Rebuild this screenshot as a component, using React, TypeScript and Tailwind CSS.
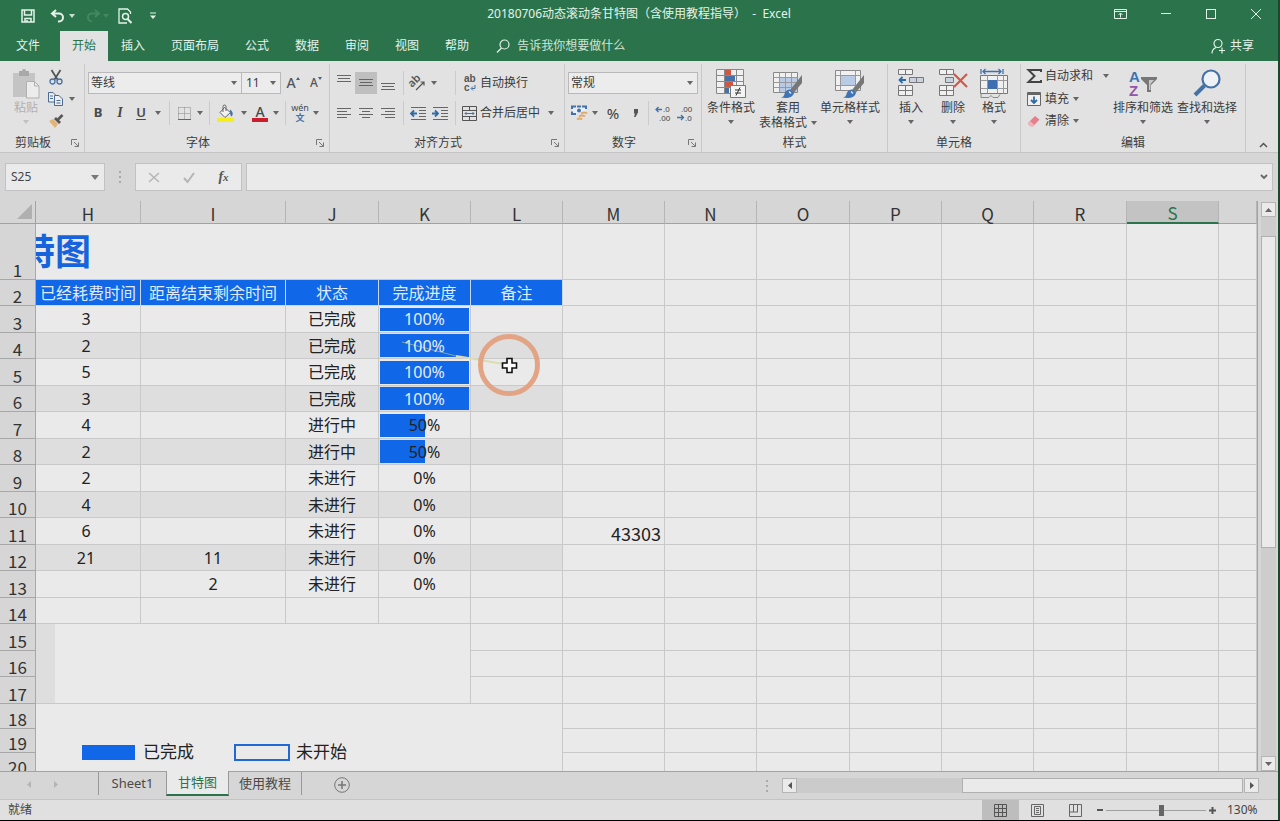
import type { ReactNode } from "react";
import clsx from "clsx";

const TABS = ["插入", "页面布局", "公式", "数据", "审阅", "视图", "帮助"];

const COLUMNS = [
  { id: "H", width: "w-[105px]" },
  { id: "I", width: "w-[145px]" },
  { id: "J", width: "w-[93px]" },
  { id: "K", width: "w-[92px]" },
  { id: "L", width: "w-[92px]" },
  { id: "M", width: "w-[102px]" },
  { id: "N", width: "w-[92px]" },
  { id: "O", width: "w-[93px]" },
  { id: "P", width: "w-[92px]" },
  { id: "Q", width: "w-[92px]" },
  { id: "R", width: "w-[93px]" },
  { id: "S", width: "w-[92px]" },
  { id: "", width: "" },
];

const HEADINGS = ["已经耗费时间", "距离结束剩余时间", "状态", "完成进度", "备注"];

type Task = { row: number; spent: string; left: string; status: string; progress: number };

const TASKS: Task[] = [
  { row: 3, spent: "3", left: "", status: "已完成", progress: 100 },
  { row: 4, spent: "2", left: "", status: "已完成", progress: 100 },
  { row: 5, spent: "5", left: "", status: "已完成", progress: 100 },
  { row: 6, spent: "3", left: "", status: "已完成", progress: 100 },
  { row: 7, spent: "4", left: "", status: "进行中", progress: 50 },
  { row: 8, spent: "2", left: "", status: "进行中", progress: 50 },
  { row: 9, spent: "2", left: "", status: "未进行", progress: 0 },
  { row: 10, spent: "4", left: "", status: "未进行", progress: 0 },
  { row: 11, spent: "6", left: "", status: "未进行", progress: 0 },
  { row: 12, spent: "21", left: "11", status: "未进行", progress: 0 },
  { row: 13, spent: "", left: "2", status: "未进行", progress: 0 },
];

/* ---------- small shared pieces ---------- */

function Icon({ w, h, children, className }: { w: number; h: number; children: ReactNode; className?: string }) {
  return (
    <svg width={w} height={h} viewBox={`0 0 ${w} ${h}`} fill="none" className={clsx("shrink-0 overflow-visible", className)} aria-hidden="true">
      {children}
    </svg>
  );
}

function Caret({ className = "text-[#666]" }: { className?: string }) {
  return (
    <Icon w={6} h={4} className={className}>
      <path d="M0 0h6L3 4z" fill="currentColor" />
    </Icon>
  );
}

function Tool({ label, width = "w-[22px]", active, children }: { label: string; width?: string; active?: boolean; children: ReactNode }) {
  return (
    <button aria-label={label} className={clsx("flex h-[22px] shrink-0 items-center justify-center", width, active && "bg-[#bfbfbf]")}>
      {children}
    </button>
  );
}

function Sep() {
  return (
    <div className="flex w-2 shrink-0 justify-center">
      <div className="h-6 w-px bg-[#cbcbcb]" />
    </div>
  );
}

function Launcher({ label }: { label: string }) {
  return (
    <button aria-label={label} className="flex w-[18px] items-center justify-center">
      <Icon w={8} h={8}>
        <path d="M.5 6V.5H6M3 3l4 4M7.5 3.500v4h-4" stroke="#777" />
      </Icon>
    </button>
  );
}

function Group({ title, width, launcher, children }: { title: string; width: string; launcher?: boolean; children: ReactNode }) {
  return (
    <section className={clsx("flex shrink-0 flex-col border-r border-[#c8c8c8]", width)}>
      <div className="h-[70px] pt-1">{children}</div>
      <div className="flex h-[18px]">
        <span className="flex-1 text-center leading-[18px]">{title}</span>
        {launcher && <Launcher label={`${title}设置`} />}
      </div>
    </section>
  );
}

function BigButton({ label, width, icon }: { label: string; width: string; icon: ReactNode }) {
  return (
    <button className={clsx("flex shrink-0 flex-col items-center whitespace-nowrap", width)}>
      <span className="flex h-8 items-center">{icon}</span>
      <span className="leading-4">{label}</span>
      <span className="flex h-3 items-center">
        <Caret />
      </span>
    </button>
  );
}

function Lines({ widths, align, top = 1 }: { widths: number[]; align: "left" | "center" | "right"; top?: number }) {
  return (
    <Icon w={14} h={18}>
      {widths.map((w, i) => {
        const x = align === "left" ? 0 : align === "right" ? 14 - w : (14 - w) / 2;
        return <rect key={i} x={x} y={top + i * 3} width={w} height={1} fill="#666" />;
      })}
    </Icon>
  );
}

/* ---------- title bar and tabs ---------- */

function TitleBar() {
  return (
    <header className="flex h-[31px] shrink-0 items-center text-[#e4f3ea]">
      <div className="flex flex-1 items-center">
        <button aria-label="保存" className="ml-[17px] flex w-[22px] justify-center">
          <Icon w={14} h={14}>
            <path d="M1 1h12v12H1zM3.500 1v5h7V1M4 13V9.500h6V13M6 11v2" stroke="currentColor" strokeWidth="1.5" />
          </Icon>
        </button>
        <button aria-label="撤消" className="ml-1.5 flex w-6 justify-center">
          <Icon w={15} h={14}>
            <path d="M6 1L2 4.500 6 8M2 4.500h7a4 4 0 010 8H8" stroke="currentColor" strokeWidth="2" />
          </Icon>
        </button>
        <Caret className="text-[#c5e0d0]" />
        <button aria-label="恢复" className="ml-2 flex w-5 justify-center text-[#44875f]">
          <Icon w={15} h={14}>
            <path d="M9 1l4 3.500L9 8M13 4.500H6a4 4 0 000 8" stroke="currentColor" strokeWidth="2" />
          </Icon>
        </button>
        <Caret className="text-[#44875f]" />
        <button aria-label="打印预览" className="ml-1 flex w-6 justify-center">
          <Icon w={14} h={16}>
            <path d="M12.500 6V4l-3-3H1v14h8" stroke="currentColor" strokeWidth="1.3" />
            <circle cx="7.500" cy="8.500" r="3" stroke="currentColor" strokeWidth="1.5" />
            <path d="M9.500 11l4 4" stroke="currentColor" strokeWidth="2" />
          </Icon>
        </button>
        <button aria-label="自定义快速访问工具栏" className="ml-1 flex w-6 justify-center">
          <Icon w={6} h={8}>
            <path d="M0 1h6" stroke="currentColor" />
            <path d="M0 3.500h6l-3 3.500z" fill="currentColor" />
          </Icon>
        </button>
      </div>
      <h1 className="pb-1 text-xs leading-5 whitespace-pre">20180706动态滚动条甘特图（含使用教程指导）  -  Excel</h1>
      <div className="flex flex-1 justify-end pb-1">
        <button aria-label="功能区显示选项" className="flex w-[45px] items-center justify-center">
          <Icon w={13} h={10}>
            <path d="M.5.5h12v9H.5zM.5 2.500h12M6.500 8.500v-4M4.500 6l2-2 2 2" stroke="currentColor" />
          </Icon>
        </button>
        <button aria-label="最小化" className="flex w-[45px] items-center justify-center">
          <Icon w={10} h={1}>
            <rect width="10" height="1" fill="currentColor" />
          </Icon>
        </button>
        <button aria-label="最大化" className="flex w-[45px] items-center justify-center">
          <Icon w={10} h={10}>
            <rect x=".5" y=".5" width="9" height="9" stroke="currentColor" />
          </Icon>
        </button>
        <button aria-label="关闭" className="flex w-[45px] items-center justify-center">
          <Icon w={10} h={10}>
            <path d="M0 0l10 10M10 0L0 10" stroke="currentColor" />
          </Icon>
        </button>
      </div>
    </header>
  );
}

function TabBar() {
  return (
    <nav className="flex h-[30px] shrink-0 items-stretch text-xs text-[#e4f3ea]">
      <button className="mr-1 w-14">文件</button>
      <button className="bg-[#e2e2e2] px-3 text-[#2b734b]">开始</button>
      {TABS.map((t) => (
        <button key={t} className="px-[13px]">
          {t}
        </button>
      ))}
      <label className="ml-3.5 flex flex-1 items-center gap-[7px]">
        <Icon w={14} h={14}>
          <circle cx="8.500" cy="5.500" r="4.500" stroke="currentColor" strokeWidth="1.2" />
          <path d="M5.500 9L1 13.500" stroke="currentColor" strokeWidth="1.300" />
        </Icon>
        <input className="w-40 placeholder:text-[#cfe5d8]" placeholder="告诉我你想要做什么" />
      </label>
      <button className="mr-6 flex items-center gap-1">
        <Icon w={15} h={16}>
          <circle cx="7" cy="5.500" r="4" stroke="currentColor" strokeWidth="1.2" />
          <path d="M1 15.500c0-3.500 1.500-5 4-6M8 12.500h6M11 9.500v6" stroke="currentColor" strokeWidth="1.200" />
        </Icon>
        共享
      </button>
    </nav>
  );
}

/* ---------- ribbon ---------- */

function ClipboardGroup() {
  return (
    <Group title="剪贴板" width="w-[85px]" launcher>
      <div className="flex pl-1">
        <button className="flex w-11 flex-col items-center text-[#b0b0b0]">
          <span className="flex h-8 items-center">
            <Icon w={28} h={30}>
              <path d="M1 4h22v24H1z" fill="#c4c4c4" />
              <path d="M7 2h3a2 2 0 014 0h3v5H7z" fill="#a9a9a9" />
              <path d="M14.500 12.500h8l4.500 4.500v12H14.500z" fill="#ececec" stroke="#b0b0b0" />
              <path d="M22.500 12.500V17H27" stroke="#b0b0b0" />
            </Icon>
          </span>
          <span className="leading-4">粘贴</span>
          <span className="flex h-3 items-center">
            <Caret className="text-[#c0c0c0]" />
          </span>
        </button>
        <div className="flex flex-col">
          <button aria-label="剪切" className="flex h-[18px] w-4 items-center justify-center">
            <Icon w={14} h={15}>
              <path d="M2.500 0l6 9.500M11.500 0l-6 9.500" stroke="#555" strokeWidth="1.800" />
              <circle cx="3.500" cy="11.500" r="2.500" stroke="#4472a8" strokeWidth="1.300" />
              <circle cx="10.500" cy="11.500" r="2.500" stroke="#4472a8" strokeWidth="1.300" />
            </Icon>
          </button>
          <button aria-label="复制" className="mt-1 flex h-[18px] items-center gap-1.5">
            <Icon w={15} h={14}>
              <path d="M.5.5H5L7.500 3v7H.5z" fill="#eee" stroke="#4a6a94" />
              <path d="M6.500 3.500H11L14.500 7v6.500h-8z" fill="#eee" stroke="#4a6a94" />
              <path d="M2 4h3M2 6.500h3M8.500 8.500h4M8.500 11h4" stroke="#4a6a94" />
            </Icon>
            <Caret />
          </button>
          <button aria-label="格式刷" className="mt-1 flex h-[18px] w-4 items-center justify-center">
            <Icon w={15} h={14}>
              <path d="M0 7l4-2 5 5-3 4z" fill="#e3b471" />
              <path d="M5 5l2-2 5 5-2 2z" fill="#555" />
              <path d="M9 5.500L13.500 1" stroke="#555" strokeWidth="2.500" />
            </Icon>
          </button>
        </div>
      </div>
    </Group>
  );
}

function FontGroup() {
  return (
    <Group title="字体" width="w-[245px]" launcher>
      <div className="flex h-[30px] items-center pl-[3px]">
        <label className="flex h-[22px] w-[154px] items-center border border-[#b9b9b9] bg-[#ececec] pr-1 pl-0.5">
          <select aria-label="字体" className="h-5 flex-1 appearance-none">
            <option>等线</option>
          </select>
          <Caret />
        </label>
        <label className="flex h-[22px] w-[39px] items-center border border-l-0 border-[#b9b9b9] bg-[#ececec] pr-1 pl-1">
          <select aria-label="字号" className="h-5 min-w-0 flex-1 appearance-none">
            <option>11</option>
          </select>
          <Caret />
        </label>
        <div className="flex text-[#555]">
          <Tool label="增大字号" width="w-6">
            <span className="text-sm leading-4 font-medium">A</span>
            <Icon w={4} h={12}>
              <path d="M0 3h4L2 0z" fill="#4a5f80" />
            </Icon>
          </Tool>
          <Tool label="减小字号">
            <span className="text-xs leading-4 font-medium">A</span>
            <Icon w={4} h={12}>
              <path d="M0 0h4L2 3z" fill="#4a5f80" />
            </Icon>
          </Tool>
        </div>
      </div>
      <div className="flex h-[30px] items-center pl-0.5 text-[#4a4a4a]">
        <Tool label="加粗">
          <b className="text-[13px]">B</b>
        </Tool>
        <Tool label="倾斜">
          <i className="font-['Liberation_Serif',serif] text-sm font-bold">I</i>
        </Tool>
        <Tool label="下划线" width="w-5">
          <span className="text-[13px] font-semibold underline underline-offset-2">U</span>
        </Tool>
        <Tool label="下划线选项" width="w-3.5">
          <Caret />
        </Tool>
        <Sep />
        <Tool label="边框">
          <Icon w={13} h={13}>
            <path d="M.5.5h12v12M.5.5v12M6.500.5v12M.5 6.500h12" stroke="#888" strokeDasharray="1 1" />
            <path d="M0 12.500h13" stroke="#666" />
          </Icon>
        </Tool>
        <Tool label="边框选项" width="w-2.5">
          <Caret />
        </Tool>
        <Sep />
        <Tool label="填充颜色" width="w-[26px]">
          <Icon w={18} h={18}>
            <path d="M7.500 3.500l6 5-5.500 5-5-5z" fill="#f2f2f2" stroke="#666" />
            <path d="M6 8V2.500a1.500 1.500 0 013 0V7" stroke="#666" />
            <path d="M13 5.500c3 2 3.500 5 1.500 7-1.500-1-1.500-4-1.500-7z" fill="#4472a8" />
            <rect y="14" width="17" height="4" fill="#f3ee20" />
          </Icon>
        </Tool>
        <Tool label="填充颜色选项" width="w-2.5">
          <Caret />
        </Tool>
        <Tool label="字体颜色">
          <span className="flex flex-col items-center">
            <span className="text-sm leading-[13px] font-medium">A</span>
            <span className="h-1 w-4 bg-[#cc1e2a]" />
          </span>
        </Tool>
        <Tool label="字体颜色选项" width="w-2.5">
          <Caret />
        </Tool>
        <Sep />
        <Tool label="拼音">
          <span className="flex flex-col items-center text-[9px] leading-[10px]">
            <span>wén</span>
            <span className="font-bold text-[#4472a8]">文</span>
          </span>
        </Tool>
        <Tool label="拼音选项" width="w-2.5">
          <Caret />
        </Tool>
      </div>
    </Group>
  );
}

function AlignGroup() {
  return (
    <Group title="对齐方式" width="w-[235px]" launcher>
      <div className="flex h-[30px] items-center pl-[3px]">
        <Tool label="顶端对齐">
          <Lines widths={[14, 12, 14]} align="center" />
        </Tool>
        <Tool label="垂直居中" active>
          <Lines widths={[14, 12, 14]} align="center" top={5} />
        </Tool>
        <Tool label="底端对齐">
          <Lines widths={[14, 12, 14]} align="center" top={9} />
        </Tool>
        <Sep />
        <Tool label="方向">
          <Icon w={16} h={15}>
            <g transform="rotate(-45 7 7)">
              <text x="0" y="7" fontSize="11" fontWeight="600" fill="#555">ab</text>
            </g>
            <path d="M6 14l8-8M10.500 6H14v3.500" stroke="#555" strokeWidth="1.200" />
          </Icon>
        </Tool>
        <Tool label="方向选项">
          <Caret className="mr-3 text-[#666]" />
        </Tool>
        <Sep />
        <button className="flex items-center">
          <span className="flex w-[21px] justify-center">
            <Icon w={13} h={16}>
              <g fontFamily="Liberation Sans" fontSize="10" fontWeight="bold" fill="#555">
                <text x="1" y="7">ab</text>
                <text x="1" y="16">c</text>
              </g>
              <path d="M12 10v3.500H8.500M10 11.500l-2 2 2 2" stroke="#4472a8" />
            </Icon>
          </span>
          自动换行
        </button>
      </div>
      <div className="flex h-[30px] items-center pl-[3px]">
        <Tool label="左对齐">
          <Lines widths={[14, 10, 14, 10]} align="left" top={4} />
        </Tool>
        <Tool label="居中">
          <Lines widths={[14, 8, 14, 8]} align="center" top={4} />
        </Tool>
        <Tool label="右对齐">
          <Lines widths={[14, 10, 14, 10]} align="right" top={4} />
        </Tool>
        <Sep />
        <Tool label="减少缩进量">
          <Icon w={16} h={13}>
            <path d="M1 .5h15M9 3.500h7M9 6.500h7M9 9.500h7M1 12.500h15" stroke="#666" />
            <path d="M7 6.500H1.500M4 3.500l-3 3 3 3" stroke="#2f6aa8" strokeWidth="1.800" />
          </Icon>
        </Tool>
        <Tool label="增加缩进量">
          <Icon w={16} h={13}>
            <path d="M1 .5h15M9 3.500h7M9 6.500h7M9 9.500h7M1 12.500h15" stroke="#666" />
            <path d="M0 6.500h5.500M3 3.500l3 3-3 3" stroke="#2f6aa8" strokeWidth="1.800" />
          </Icon>
        </Tool>
        <Sep />
        <button className="flex items-center">
          <span className="flex w-[21px] justify-center">
            <Icon w={15} h={15}>
              <path d="M.5.5h14v14H.5zM.5 4.500h14M.5 10.500h14M7.500.5v4M7.500 10.500v4" stroke="#555" />
              <path d="M3 7.500h9M4.500 6L3 7.500 4.500 9M10.500 6L12 7.500 10.500 9" stroke="#4472a8" />
            </Icon>
          </span>
          合并后居中
        </button>
        <Tool label="合并选项">
          <Caret />
        </Tool>
      </div>
    </Group>
  );
}

function NumberGroup() {
  return (
    <Group title="数字" width="w-[137px]" launcher>
      <div className="flex h-[30px] items-center px-[3px]">
        <label className="flex h-[22px] flex-1 items-center border border-[#b9b9b9] bg-[#ececec] pr-1 pl-0.5">
          <select aria-label="数字格式" className="h-5 flex-1 appearance-none">
            <option>常规</option>
          </select>
          <Caret />
        </label>
      </div>
      <div className="flex h-[30px] items-center pl-[3px]">
        <Tool label="会计数字格式">
          <Icon w={17} h={16}>
            <path d="M1 1.500h14v7H1z" fill="#e8eef5" />
            <path d="M1 4V1.500h4M11 1.500h4V4M1 6.500V9h4M6 1.500h4" stroke="#4472a8" strokeWidth="2" />
            <circle cx="8" cy="5.500" r="2" fill="#4472a8" />
            <path d="M10 8.500c2-1.500 5-1.500 6 0M8 11.500c2-1.500 5-1.500 6 0M6 14.500c2-1.500 4-1.500 5 0" stroke="#e0a96a" strokeWidth="2" />
          </Icon>
        </Tool>
        <Tool label="会计格式选项" width="w-2.5">
          <Caret />
        </Tool>
        <Tool label="百分比样式" width="w-[26px]">
          <span className="text-[15px]">%</span>
        </Tool>
        <Tool label="千位分隔样式" width="w-[18px]">
          <Icon w={5} h={8}>
            <path d="M1 0h4v3.500L2.500 8H1l1-3.500H1z" fill="#555" />
          </Icon>
        </Tool>
        <Sep />
        <Tool label="增加小数位数">
          <Icon w={16} h={15}>
            <g fontFamily="Liberation Sans" fontSize="8" fill="#444">
              <text x="8" y="6">.0</text>
              <text x="4" y="15">.00</text>
            </g>
            <path d="M7 3.500H1.500M3.500 1L1 3.500 3.500 6" stroke="#4472a8" strokeWidth="1.300" />
          </Icon>
        </Tool>
        <Tool label="减少小数位数">
          <Icon w={16} h={15}>
            <g fontFamily="Liberation Sans" fontSize="8" fill="#444">
              <text x="4" y="6">.00</text>
              <text x="8" y="15">.0</text>
            </g>
            <path d="M0 11.500h6M4 9l2.500 2.500L4 14" stroke="#4472a8" strokeWidth="1.300" />
          </Icon>
        </Tool>
      </div>
    </Group>
  );
}

function BrushMark() {
  return (
    <>
      <path d="M29 6L17 21l3.500 3L29 14z" fill="#777" />
      <path d="M17 20.500l4 3.500c-1 4-6 6-13 4.500 3.500-1 3-2.500 4-5 1-2 3-3 5-3z" fill="#3f73b5" />
      <path d="M16 22.500l2 2" stroke="#dfe9f5" strokeWidth="1.500" />
    </>
  );
}

function StylesGroup() {
  return (
    <Group title="样式" width="w-[186px]">
      <div className="flex">
        <BigButton
          label="条件格式"
          width="w-[58px]"
          icon={
            <Icon w={30} h={30}>
              <path d="M.5.5h27v24H.5z" fill="#f0f0f0" stroke="#888" />
              <path d="M9 1h6v5H9zM9 13h8v5H9z" fill="#d2553f" />
              <path d="M9 7h10v5H9zM9 19h4v5H9z" fill="#4472a8" />
              <path d="M8.500.5v24M20.500.5v24M.5 6.500h27M.5 12.500h27M.5 18.500h27" stroke="#888" />
              <path d="M14.500 16.500h15v12h-15z" fill="#f4f4f4" stroke="#777" />
              <path d="M19 21h6M19 24h6M24 18.500l-4 8" stroke="#333" />
            </Icon>
          }
        />
        <button className="flex w-14 shrink-0 flex-col items-center whitespace-nowrap">
          <span className="flex h-8 items-center">
            <Icon w={30} h={30}>
              <path d="M.5 3.500h24v20H.5z" fill="#f0f0f0" stroke="#888" />
              <path d="M7 9h17v14H7z" fill="#b9cbe4" />
              <path d="M6.500 3.500v20M12.500 3.500v20M18.500 3.500v20M.5 8.500h24M.5 13.500h24M.5 18.500h24" stroke="#999" />
              <BrushMark />
            </Icon>
          </span>
          <span className="leading-4">套用</span>
          <span className="flex items-center gap-1 leading-[14px]">
            表格格式
            <Caret />
          </span>
        </button>
        <BigButton
          label="单元格样式"
          width="w-[68px]"
          icon={
            <Icon w={30} h={30}>
              <path d="M.5 1.500h25v20H.5z" fill="#f0f0f0" stroke="#888" />
              <path d="M5.500 1.500v20M20.500 1.500v20M.5 6.500h25M.5 16.500h25" stroke="#999" />
              <path d="M6 7h14v9H6z" fill="#b9cbe4" />
              <BrushMark />
            </Icon>
          }
        />
      </div>
    </Group>
  );
}

function CellsGroup() {
  return (
    <Group title="单元格" width="w-[133px]">
      <div className="flex pl-0.5">
        <BigButton
          label="插入"
          width="w-[42px]"
          icon={
            <Icon w={26} h={30}>
              <path d="M.5.5h14v5H.5zM7.500.5v5M.5 16.500h14v10H.5zM7.500 16.500v10M.5 21.500h14" fill="#f0f0f0" stroke="#777" />
              <path d="M11.500 8.500h14v5h-14zM18.500 8.500v5" fill="#c9d3e0" stroke="#777" />
              <path d="M8 11H2M4.500 8L1.500 11l3 3" stroke="#2f6aa8" strokeWidth="1.800" />
            </Icon>
          }
        />
        <BigButton
          label="删除"
          width="w-[42px]"
          icon={
            <Icon w={29} h={30}>
              <path d="M.5.5h14v5H.5zM7.500.5v5M.5 16.500h14v10H.5zM7.500 16.500v10M.5 21.500h14" fill="#f0f0f0" stroke="#777" />
              <path d="M6.500 8.500h8v5h-8z" fill="#c9d3e0" stroke="#777" />
              <path d="M15 5l13 13M28 5L15 18" stroke="#cf5a48" strokeWidth="2.200" />
            </Icon>
          }
        />
        <BigButton
          label="格式"
          width="w-[40px]"
          icon={
            <Icon w={28} h={30}>
              <path d="M1 0v5M23 0v5M3 2.500h18M5.500 0L3 2.500 5.500 5M18.500 0L21 2.500 18.500 5" stroke="#3f6fb0" strokeWidth="1.300" />
              <path d="M.5 6.500h27v18H.5z" fill="#f0f0f0" stroke="#777" />
              <path d="M7.500 6.500v18M17.500 6.500v18M.5 11.500h27M.5 19.500h27M23.500 6.500v18" stroke="#999" />
              <path d="M8 11h9v9H8z" fill="#3f6fb0" />
              <path d="M1 25v3.500h8l2-2 2 2h5l2-3" stroke="#888" />
            </Icon>
          }
        />
      </div>
    </Group>
  );
}

function EditGroup() {
  return (
    <Group title="编辑" width="w-[225px]">
      <div className="flex">
        <div className="flex w-[90px] flex-col pl-[6px]">
          <button className="-mt-1 flex h-[23px] items-center">
            <Icon w={15} h={14} className="mr-[3px]">
              <path d="M14 3V1H1.500l6 6-6 6H14v-2" stroke="#444" strokeWidth="2" />
            </Icon>
            自动求和
            <Caret className="ml-2.5 text-[#666]" />
          </button>
          <button className="flex h-[23px] items-center">
            <Icon w={14} h={14} className="mr-1">
              <path d="M.5.5h13v13H.5z" fill="#f0f0f0" stroke="#666" />
              <path d="M1 1h12v2H1z" fill="#666" />
              <path d="M7 4.500v6M4 8l3 3 3-3" stroke="#2f6aa8" strokeWidth="1.800" />
            </Icon>
            填充
            <Caret className="ml-1 text-[#666]" />
          </button>
          <button className="flex h-[22px] items-center">
            <Icon w={14} h={14} className="mr-1">
              <path d="M1 9l7-7 4.500 3.500L6 12.500 2.500 12z" fill="#e57f8c" />
              <path d="M1 9l2-2 4.500 4L6 12.500 2.500 12z" fill="#f0b3bb" />
            </Icon>
            清除
            <Caret className="ml-1 text-[#666]" />
          </button>
        </div>
        <BigButton
          label="排序和筛选"
          width="w-16"
          icon={
            <Icon w={30} h={30}>
              <g fontFamily="Liberation Sans" fontSize="15" fontWeight="bold">
                <text x="1" y="13" fill="#3f73b5">A</text>
                <text x="1" y="27" fill="#9254a8">Z</text>
              </g>
              <path d="M13 8h16v2l-6 6v7h-4v-7l-6-6z" fill="#777" />
              <path d="M21 11h5l-3.500 4v6H21z" fill="#c9c9c9" />
            </Icon>
          }
        />
        <BigButton
          label="查找和选择"
          width="w-16"
          icon={
            <Icon w={28} h={30}>
              <circle cx="18" cy="10" r="8.500" fill="#eef2f7" stroke="#4472a8" strokeWidth="2.200" />
              <path d="M11.500 16.500L2 26" stroke="#4472a8" strokeWidth="4" />
            </Icon>
          }
        />
      </div>
    </Group>
  );
}

function Ribbon() {
  return (
    <div className="flex h-[92px] shrink-0 border-b border-[#c4c4c4] bg-[#e2e2e2] pt-[3px] text-xs text-[#3c3c3c]">
      <ClipboardGroup />
      <FontGroup />
      <AlignGroup />
      <NumberGroup />
      <StylesGroup />
      <CellsGroup />
      <EditGroup />
      <div className="flex flex-1 items-end justify-end pr-2.5 pb-1">
        <button aria-label="折叠功能区">
          <Icon w={9} h={6}>
            <path d="M1 5l3.500-3.500L8 5" stroke="#555" strokeWidth="1.500" />
          </Icon>
        </button>
      </div>
    </div>
  );
}

function FormulaBar() {
  return (
    <div className="flex h-12 shrink-0 items-start bg-[#d6d6d6] px-[5px] pt-[10px] text-xs text-[#444]">
      <div className="flex h-7 w-[100px] items-center border border-[#c2c2c2] bg-[#eaeaea] px-[5px]">
        <input aria-label="名称框" className="w-0 flex-1" defaultValue="S25" />
        <button aria-label="名称列表">
          <Icon w={8} h={5}>
            <path d="M0 0h8L4 5z" fill="#777" />
          </Icon>
        </button>
      </div>
      <div className="flex h-7 w-[30px] items-center justify-center">
        <Icon w={2} h={12}>
          <path d="M1 0v12" stroke="#aaa" strokeWidth="2" strokeDasharray="2 3" />
        </Icon>
      </div>
      <div className="flex h-7 w-[107px] items-center border border-[#c2c2c2] bg-[#eaeaea]">
        <button aria-label="取消" className="flex flex-1 justify-center">
          <Icon w={12} h={11}>
            <path d="M1 1l10 9M11 1L1 10" stroke="#b5b5b5" strokeWidth="1.500" />
          </Icon>
        </button>
        <button aria-label="输入" className="flex flex-1 justify-center">
          <Icon w={12} h={11}>
            <path d="M1 6l3.500 4L11 1" stroke="#b5b5b5" strokeWidth="2" />
          </Icon>
        </button>
        <button aria-label="插入函数" className="flex-1 font-['Liberation_Serif',serif] text-sm font-bold text-[#555] italic">
          f<span className="text-[11px]">x</span>
        </button>
      </div>
      <div className="ml-1 flex h-7 flex-1 items-center border border-[#c2c2c2] bg-[#eaeaea] pr-1">
        <input aria-label="编辑栏" className="h-full flex-1 px-1" />
        <button aria-label="展开编辑栏">
          <Icon w={8} h={6}>
            <path d="M1 1l3 3 3-3" stroke="#666" strokeWidth="1.800" />
          </Icon>
        </button>
      </div>
    </div>
  );
}

/* ---------- sheet ---------- */

const CELL = "border-r border-b border-[#c9c9c9] p-0";
const GRID_FONT = "font-['Noto_Sans_CJK_SC',sans-serif]";

function rowHeight(row: number) {
  if (row === 1) return "h-14";
  if (row === 2) return "h-[26px]";
  if (row === 18) return "h-[25px]";
  if (row > 18) return "h-6";
  return row % 2 ? "h-[27px]" : "h-[26px]";
}

function Progress({ value }: { value: number }) {
  return (
    <div className="mx-px grid h-[23px] items-center">
      <div className="col-start-1 row-start-1 h-full bg-[#1067e8]" style={{ width: `${value}%` }} />
      <span className={clsx("z-10 col-start-1 row-start-1", value === 100 && "text-[#e6eefb]")}>{value}%</span>
    </div>
  );
}

function TableCells({ row }: { row: number }) {
  if (row === 1) {
    return (
      <td colSpan={5} className={CELL}>
        <div className="flex w-[55px] justify-end overflow-hidden text-4xl leading-[54px] font-bold whitespace-nowrap text-[#1763dd]">
          <span>甘特图</span>
        </div>
      </td>
    );
  }
  if (row === 2) {
    return HEADINGS.map((h) => (
      <th key={h} className="border-r border-b border-[#c6d8f2] bg-[#1067e8] p-0 font-normal whitespace-nowrap text-[#dfeafb]">
        {h}
      </th>
    ));
  }
  const task = TASKS.find((t) => t.row === row);
  if (task) {
    const cell = clsx(CELL, row % 2 === 0 && "bg-[#dedede]");
    return (
      <>
        <td className={clsx(cell, "pr-1")}>{task.spent}</td>
        <td className={cell}>{task.left}</td>
        <td className={cell}>{task.status}</td>
        <td className={cell}>
          <Progress value={task.progress} />
        </td>
        <td className={cell} />
      </>
    );
  }
  if (row === 14) return HEADINGS.map((h) => <td key={h} className={CELL} />);
  if (row === 15) {
    return (
      <>
        <td colSpan={4} rowSpan={3} className={CELL}>
          <div className="h-[79px] w-[19px] bg-[#dedede]" />
        </td>
        <td className={CELL} />
      </>
    );
  }
  if (row < 18) return <td className={CELL} />;
  if (row === 18) {
    return (
      <td colSpan={5} rowSpan={3} className={clsx(CELL, "align-top")}>
        <div className="flex items-center pt-9 pl-[46px] text-[17px] leading-6">
          <span className="h-[15px] w-[53px] bg-[#1067e8]" />
          <span className="ml-2 w-[91px] text-left">已完成</span>
          <span className="h-[17px] w-14 border-2 border-[#1f68d6]" />
          <span className="ml-1.5">未开始</span>
        </div>
      </td>
    );
  }
  return null;
}

function Sheet() {
  return (
    <div className="relative min-w-0 flex-1 overflow-hidden bg-[#eaeaea]">
      <table className="w-full table-fixed border-separate border-spacing-0 text-center text-base leading-5 text-[#222]">
        <colgroup>
          <col className="w-9" />
          {COLUMNS.map((c, i) => (
            <col key={i} className={c.width} />
          ))}
        </colgroup>
        <thead>
          <tr className="h-[23px]">
            <th className="border-r border-b border-[#a3a3a3] bg-[#d6d6d6] p-0">
              <Icon w={32} h={16}>
                <path d="M32 0v15H17z" fill="#b0b0b0" />
              </Icon>
            </th>
            {COLUMNS.map((c, i) => (
              <th
                key={i}
                className={clsx(
                  GRID_FONT,
                  "border-r p-0 align-bottom text-[17px] leading-[19px] font-normal",
                  c.id === "S"
                    ? "border-r-[#b5b5b5] border-b-2 border-b-[#2b734b] bg-[#c3c3c3] text-[#2b734b]"
                    : "border-b border-r-[#b5b5b5] border-b-[#a3a3a3] bg-[#d6d6d6] text-[#333]"
                )}
              >
                {c.id}
              </th>
            ))}
          </tr>
        </thead>
        <tbody>
          {Array.from({ length: 20 }, (_, i) => i + 1).map((row) => (
            <tr key={row} className={rowHeight(row)}>
              <th className={clsx(GRID_FONT, "border-r border-b border-[#a8a8a8] bg-[#d6d6d6] p-0 align-bottom text-[17px] leading-[19px] font-normal text-[#333]")}>
                {row}
              </th>
              <TableCells row={row} />
              {COLUMNS.slice(5).map((c, i) => (
                <td key={i} className={clsx(CELL, GRID_FONT, "text-right align-bottom text-lg leading-[22px]", c.id === "M" && "pr-[3px]")}>
                  {row === 11 && c.id === "M" ? "43303" : ""}
                </td>
              ))}
            </tr>
          ))}
        </tbody>
      </table>
      {/* mouse pointer with its click highlight and trail */}
      <svg width="142" height="66" viewBox="0 0 142 66" fill="none" className="absolute top-[131px] left-[400px]" aria-hidden="true">
        <path d="M2 10l54 14" stroke="#7fa6a8" />
        <path d="M56 24l48 8" stroke="#dcdcb4" strokeWidth="2" />
        <circle cx="109" cy="33" r="28.500" stroke="#e2a484" strokeWidth="5" />
        <path d="M107 26.500h5v4.500h4.500v5H112v4.500h-5V36h-4.500v-5h4.500z" fill="#fff" stroke="#111" strokeWidth="1.600" />
      </svg>
    </div>
  );
}

function VerticalScroll() {
  return (
    <div className="flex w-[21px] shrink-0 flex-col items-center border-l border-[#a3a3a3] bg-[#d6d6d6] pt-px">
      <button aria-label="向上滚动" className="flex h-[15px] w-[15px] items-center justify-center border border-[#b5b5b5] bg-[#eaeaea]">
        <Icon w={7} h={4}>
          <path d="M0 4h7L3.500 0z" fill="#666" />
        </Icon>
      </button>
      <div className="flex w-[15px] flex-1 flex-col bg-[#cdcdcd] pt-[19px]">
        <div className="h-[312px] border border-[#b0b0b0] bg-[#eaeaea]" />
      </div>
      <button aria-label="向下滚动" className="flex h-[15px] w-[15px] items-center justify-center border border-[#b5b5b5] bg-[#eaeaea]">
        <Icon w={7} h={4}>
          <path d="M0 0h7L3.500 4z" fill="#666" />
        </Icon>
      </button>
    </div>
  );
}

function SheetTabs() {
  return (
    <div className="flex h-7 shrink-0 items-start border-t border-[#a3a3a3] bg-[#d6d6d6] text-[13px] text-[#4a4a4a]">
      <div className="flex h-6 w-[98px] items-center gap-[23px] pl-[27px]">
        <button aria-label="上一个工作表">
          <Icon w={4} h={7}>
            <path d="M4 0v7L0 3.500z" fill="#b5b5b5" />
          </Icon>
        </button>
        <button aria-label="下一个工作表">
          <Icon w={4} h={7}>
            <path d="M0 0v7l4-3.500z" fill="#b5b5b5" />
          </Icon>
        </button>
      </div>
      <button className="h-[23px] w-[68px] border-l border-[#999]">Sheet1</button>
      <button className="-mt-px h-[25px] w-[63px] border-x border-b-2 border-x-[#999] border-b-[#2b734b] bg-[#eaeaea] text-[#2b734b]">甘特图</button>
      <button className="h-[23px] w-[73px] border-r border-[#999]">使用教程</button>
      <button aria-label="新工作表" className="ml-8 flex h-[26px] items-center">
        <Icon w={16} h={16}>
          <circle cx="8" cy="8" r="7.300" stroke="#777" />
          <path d="M8 4v8M4 8h8" stroke="#777" strokeWidth="1.500" />
        </Icon>
      </button>
      <div className="flex h-[27px] flex-1 items-center justify-end pr-[19px]">
        <Icon w={2} h={12} className="mr-[14px]">
          <path d="M1 0v12" stroke="#aaa" strokeWidth="2" strokeDasharray="2 3" />
        </Icon>
        <button aria-label="向左滚动" className="flex h-[15px] w-[15px] items-center justify-center border border-[#b5b5b5] bg-[#eaeaea]">
          <Icon w={4} h={7}>
            <path d="M4 0v7L0 3.500z" fill="#555" />
          </Icon>
        </button>
        <div className="flex h-[15px] w-[446px] justify-end bg-[#cbcbcb]">
          <div className="w-[281px] border border-[#b0b0b0] bg-[#eaeaea]" />
        </div>
        <button aria-label="向右滚动" className="ml-px flex h-[15px] w-[15px] items-center justify-center border border-[#b5b5b5] bg-[#eaeaea]">
          <Icon w={4} h={7}>
            <path d="M0 0v7l4-3.500z" fill="#555" />
          </Icon>
        </button>
      </div>
    </div>
  );
}

function StatusBar() {
  return (
    <footer className="flex h-[21px] shrink-0 items-stretch border-t border-[#c4c4c4] bg-[#e0e0e0] text-xs leading-5 text-[#444]">
      <span className="flex-1 pl-2">就绪</span>
      <button aria-label="普通" className="flex w-[37px] items-center justify-center bg-[#bdbdbd]">
        <Icon w={13} h={13}>
          <path d="M.5.5h12v12H.5zM4.500.5v12M8.500.5v12M.5 4.500h12M.5 8.500h12" stroke="#555" />
        </Icon>
      </button>
      <button aria-label="页面布局" className="flex w-[37px] items-center justify-center">
        <Icon w={13} h={13}>
          <path d="M.5.5h12v12H.5zM3.500 2.500h6v8h-6zM5 4.500h3M5 6.500h3M5 8.500h3" stroke="#666" />
        </Icon>
      </button>
      <button aria-label="分页预览" className="flex w-[38px] items-center justify-center">
        <Icon w={13} h={13}>
          <path d="M.5.5h12v12H.5zM4.500.5v7.500M8.500.5v7.500M0 8h9" stroke="#666" />
        </Icon>
      </button>
      <button aria-label="缩小" className="flex w-3 items-center justify-center">
        <Icon w={6} h={2}>
          <rect width="6" height="2" fill="#555" />
        </Icon>
      </button>
      <input
        type="range"
        aria-label="显示比例"
        defaultValue={56}
        className="my-auto h-px w-[100px] appearance-none bg-[#a0a0a0] [&::-webkit-slider-thumb]:h-[11px] [&::-webkit-slider-thumb]:w-[5px] [&::-webkit-slider-thumb]:appearance-none [&::-webkit-slider-thumb]:bg-[#666]"
      />
      <button aria-label="放大" className="flex w-3 items-center justify-center">
        <Icon w={7} h={7}>
          <path d="M3.500 0v7M0 3.500h7" stroke="#555" strokeWidth="2" />
        </Icon>
      </button>
      <span className="w-[60px] pl-[9px]">130%</span>
    </footer>
  );
}

export default function App() {
  return (
    <div className="flex h-screen flex-col overflow-hidden border-r-2 border-b border-r-[#17492f] border-b-black bg-[#2b734b] font-['Noto_Sans','Noto_Sans_CJK_SC',sans-serif]">
      <TitleBar />
      <TabBar />
      <Ribbon />
      <FormulaBar />
      <main className="flex min-h-0 flex-1">
        <Sheet />
        <VerticalScroll />
      </main>
      <SheetTabs />
      <StatusBar />
    </div>
  );
}
